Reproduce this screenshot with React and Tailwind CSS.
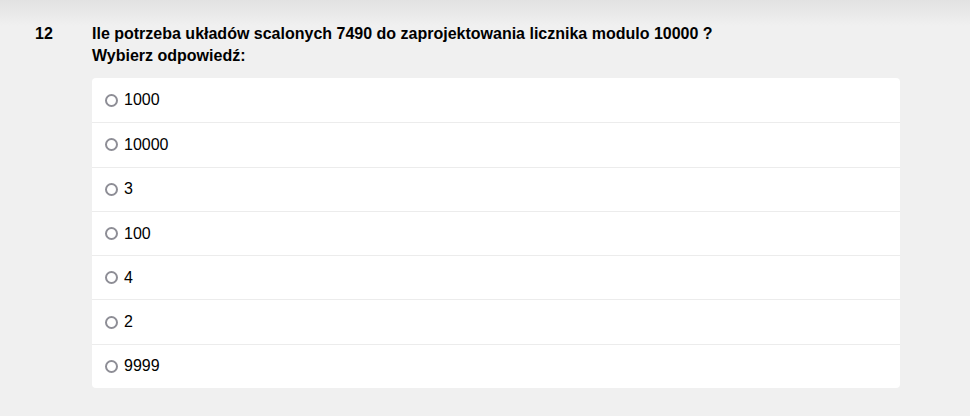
import { useState } from "react";

const options = ["1000", "10000", "3", "100", "4", "2", "9999"];

export default function App() {
  const [picked, setPicked] = useState(null);

  return (
    <div className="min-h-[416px] bg-[#f0f0f0] font-['Liberation_Sans',Arial,sans-serif] text-black">
      <div className="h-[26px] bg-gradient-to-b from-[#e2e2e2] to-[#f0f0f0]" />
      <div className="flex pl-[35px]">
        <div className="w-[57px] text-[16px] font-bold leading-[22px] -mt-[3px]">12</div>
        <div className="w-[808px] -mt-[3px]">
          <div className="text-[16px] font-bold leading-[22px]">
            Ile potrzeba układów scalonych 7490 do zaprojektowania licznika modulo 10000 ?
          </div>
          <div className="text-[16px] font-bold leading-[22px]">Wybierz odpowiedź:</div>

          {/* ANSWERS */}
          <div className="mt-[11px] bg-white rounded-[4px] overflow-hidden">
            {options.map((o, i) => (
              <label
                key={o}
                className={
                  "flex items-center h-[44.3px] pl-[13px] gap-[6px] cursor-pointer " +
                  (i > 0 ? "border-t border-[#ececec]" : "")
                }
              >
                <input
                  type="radio"
                  name="q12"
                  checked={picked === o}
                  onChange={() => setPicked(o)}
                  className="sr-only"
                />
                <span className="w-[13px] h-[13px] rounded-full border-2 border-[#8e8e96] bg-white flex items-center justify-center">
                  {picked === o && <span className="w-[5px] h-[5px] rounded-full bg-[#333]" />}
                </span>
                <span className="text-[16px] leading-[20px]">{o}</span>
              </label>
            ))}
          </div>
        </div>
      </div>
    </div>
  );
}
